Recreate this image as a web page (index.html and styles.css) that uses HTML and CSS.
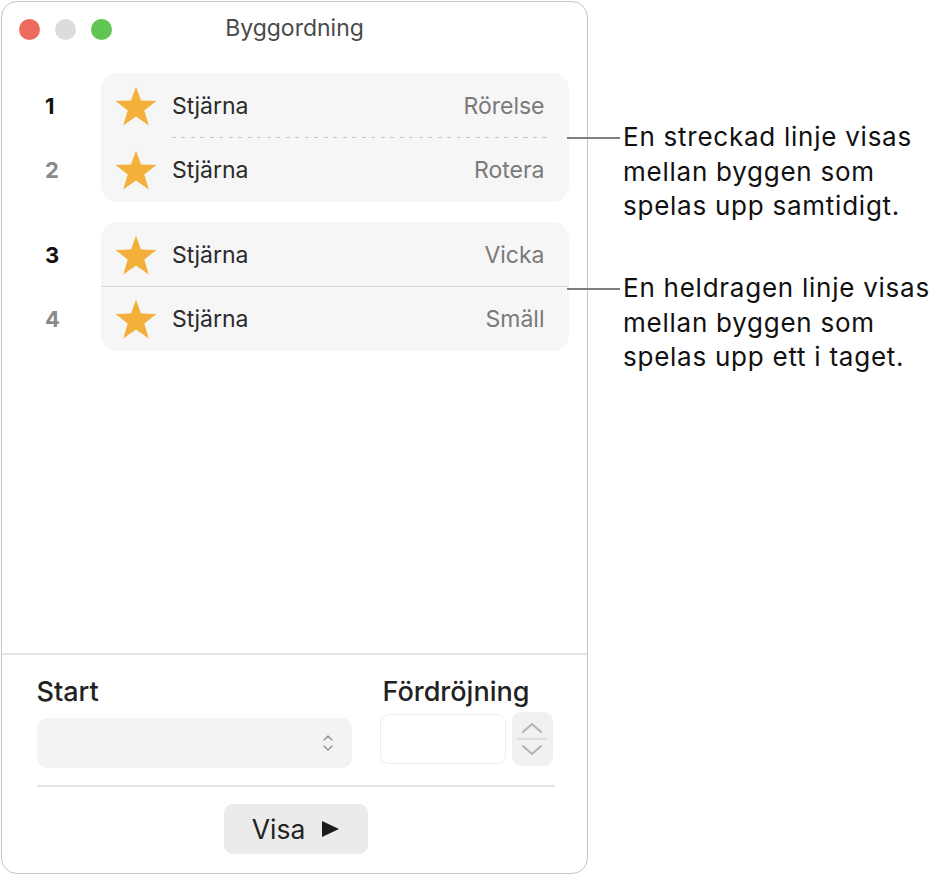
FILE: index.html
```html
<!DOCTYPE html>
<html lang="sv">
<head>
    <meta charset="UTF-8">
    <meta name="viewport" content="width=device-width, initial-scale=1.0">
    <title>Byggordning</title>
    <link rel="stylesheet" href="styles.css">
</head>
<body>

<div class="page">
    <div class="window">
        <div class="titlebar">
            <div class="lights">
                <span class="light red"></span>
                <span class="light idle"></span>
                <span class="light green"></span>
            </div>
            <div class="title">Byggordning</div>
            <div></div>
        </div>

        <div class="builds">
            <div class="build-group">
                <div class="numbers">
                    <span class="num active">1</span>
                    <span class="num">2</span>
                </div>
                <div class="group">
                    <div class="row">
                        <svg class="star" viewBox="0 0 42 40"><polygon points="21,0.5 26,14.5 41.5,15 29.3,24.4 33.7,39.5 21,30.6 8.3,39.5 12.7,24.4 0.5,15 16,14.5"/></svg>
                        <span class="name">Stjärna</span>
                        <span class="effect">Rörelse</span>
                    </div>
                    <div class="divider dashed"></div>
                    <div class="row">
                        <svg class="star" viewBox="0 0 42 40"><polygon points="21,0.5 26,14.5 41.5,15 29.3,24.4 33.7,39.5 21,30.6 8.3,39.5 12.7,24.4 0.5,15 16,14.5"/></svg>
                        <span class="name">Stjärna</span>
                        <span class="effect">Rotera</span>
                    </div>
                </div>
            </div>

            <div class="build-group">
                <div class="numbers">
                    <span class="num active">3</span>
                    <span class="num">4</span>
                </div>
                <div class="group">
                    <div class="row">
                        <svg class="star" viewBox="0 0 42 40"><polygon points="21,0.5 26,14.5 41.5,15 29.3,24.4 33.7,39.5 21,30.6 8.3,39.5 12.7,24.4 0.5,15 16,14.5"/></svg>
                        <span class="name">Stjärna</span>
                        <span class="effect">Vicka</span>
                    </div>
                    <div class="divider solid"></div>
                    <div class="row">
                        <svg class="star" viewBox="0 0 42 40"><polygon points="21,0.5 26,14.5 41.5,15 29.3,24.4 33.7,39.5 21,30.6 8.3,39.5 12.7,24.4 0.5,15 16,14.5"/></svg>
                        <span class="name">Stjärna</span>
                        <span class="effect">Smäll</span>
                    </div>
                </div>
            </div>
        </div>

        <div class="inspector">
            <div class="fields">
                <label class="field-label">Start</label>
                <label class="field-label delay-label">Fördröjning</label>

                <div class="select">
                    <svg class="select-arrows" viewBox="0 0 12 20"><polyline points="2,7 6,3 10,7"/><polyline points="2,13 6,17 10,13"/></svg>
                </div>
                <div class="delay">
                    <div class="delay-input"></div>
                    <div class="stepper">
                        <svg class="step-up" viewBox="0 0 24 12"><polyline points="3,10 12,2 21,10"/></svg>
                        <div class="step-line"></div>
                        <svg class="step-down" viewBox="0 0 24 12"><polyline points="3,2 12,10 21,2"/></svg>
                    </div>
                </div>
            </div>
            <div class="footer">
                <button class="show-button">Visa <span class="play"></span></button>
            </div>
        </div>
    </div>

    <div class="callouts">
        <p class="callout">En streckad linje visas<br>mellan byggen som<br>spelas upp samtidigt.</p>
        <p class="callout second">En heldragen linje visas<br>mellan byggen som<br>spelas upp ett i taget.</p>
    </div>
</div>

</body>
</html>
```

FILE: styles.css
```css
body {
    margin: 0;
    background-color: #ffffff;
    font-family: Inter, "Noto Sans", sans-serif;
    color: #262626;
}
.page {
    display: flex;
    align-items: flex-start;
}
.window {
    box-sizing: border-box;
    width: 587px;
    height: 873px;
    margin: 1px 0 0 1px;
    border: 1.5px solid #c6c6c6;
    border-radius: 16px;
    display: flex;
    flex-direction: column;
    background: #ffffff;
}
.titlebar {
    height: 55px;
    display: grid;
    grid-template-columns: 1fr auto 1fr;
    align-items: center;
}
.lights {
    display: flex;
    gap: 15px;
    padding-left: 17px;
}
.light {
    width: 21px;
    height: 21px;
    border-radius: 50%;
}
.light.red {
    background: #ec6a5e;
}
.light.idle {
    background: #dcdcdc;
}
.light.green {
    background: #61c554;
}
.title {
    font-size: 23px;
    color: #4a4a4a;
    margin-top: -3px;
}
.builds {
    padding: 15.5px 18.5px 0 0;
    display: flex;
    flex-direction: column;
    gap: 20px;
}
.build-group {
    display: flex;
}
.numbers {
    width: 99px;
    padding: 1px 0 0 43px;
    box-sizing: border-box;
    display: flex;
    flex-direction: column;
}
.num {
    height: 64px;
    line-height: 64px;
    font-size: 22px;
    font-weight: 700;
    color: #8a8a8a;
}
.num.active {
    color: #111111;
}
.group {
    flex: 1;
    background: #f6f6f6;
    border-radius: 16px;
    padding-top: 1px;
}
.row {
    height: 64px;
    display: flex;
    align-items: center;
    padding: 0 24px 0 14px;
}
.star {
    width: 42px;
    height: 40px;
    fill: #f3b13b;
}
.name {
    margin-left: 15px;
    font-size: 23px;
    color: #2a2a2a;
}
.effect {
    margin-left: auto;
    font-size: 23px;
    color: #7a7a7a;
}
.divider {
    height: 1.5px;
    margin: -0.75px 0;
    position: relative;
}
.divider.dashed {
    margin-left: 71px;
    margin-right: 22px;
    background: repeating-linear-gradient(90deg, #c9c9c9 0 4px, transparent 4px 9.5px);
}
.divider.solid {
    background: #d8d8d8;
}
.inspector {
    margin-top: auto;
    border-top: 2px solid #e4e4e4;
    padding: 24px 32.5px 19.5px 34.5px;
}
.fields {
    display: grid;
    grid-template-columns: 315px 1fr;
    column-gap: 28px;
    padding-bottom: 17px;
    border-bottom: 2px solid #e4e4e4;
}
.field-label {
    font-size: 27px;
    line-height: 26px;
    font-weight: 500;
    color: #222222;
}
.delay-label {
    padding-left: 3px;
}
.select {
    margin-top: 13px;
    height: 50px;
    background: #f3f3f3;
    border-radius: 10px;
    display: flex;
    align-items: center;
    justify-content: flex-end;
    padding-right: 18px;
}
.select-arrows {
    width: 12px;
    height: 20px;
    fill: none;
    stroke: #9c9c9c;
    stroke-width: 1.6;
    stroke-linecap: round;
    stroke-linejoin: round;
}
.delay {
    margin-top: 7px;
    display: flex;
    gap: 6px;
}
.delay-input {
    box-sizing: border-box;
    width: 126px;
    height: 50px;
    margin-top: 2px;
    border: 1.5px solid #ececec;
    border-radius: 9px;
}
.stepper {
    width: 41px;
    height: 54px;
    background: #f1f1f1;
    border-radius: 9px;
    display: flex;
    flex-direction: column;
    align-items: center;
    justify-content: center;
    gap: 4px;
}
.stepper svg {
    width: 24px;
    height: 12px;
    fill: none;
    stroke: #b3b3b3;
    stroke-width: 2;
    stroke-linecap: round;
    stroke-linejoin: round;
}
.step-line {
    width: 30px;
    height: 2px;
    background: #dedede;
}
.footer {
    display: flex;
    justify-content: center;
    padding-top: 17px;
}
.show-button {
    width: 144px;
    height: 50px;
    border: none;
    border-radius: 9px;
    background: #ebebeb;
    font-family: inherit;
    font-size: 26.5px;
    color: #222222;
    display: flex;
    align-items: center;
    justify-content: center;
    gap: 17px;
    padding: 0;
}
.play {
    width: 0;
    height: 0;
    border-top: 8.5px solid transparent;
    border-bottom: 8.5px solid transparent;
    border-left: 17px solid #1c1c1c;
}
.callouts {
    padding: 120px 0 0 35px;
}
.callout {
    position: relative;
    margin: 0;
    font-size: 26px;
    line-height: 34.5px;
    letter-spacing: 0.75px;
    color: #111111;
}
.callout.second {
    margin-top: 47.5px;
}
.callout::before {
    content: "";
    position: absolute;
    left: -56px;
    top: 17px;
    width: 53px;
    height: 1.5px;
    background: #808080;
}
```
